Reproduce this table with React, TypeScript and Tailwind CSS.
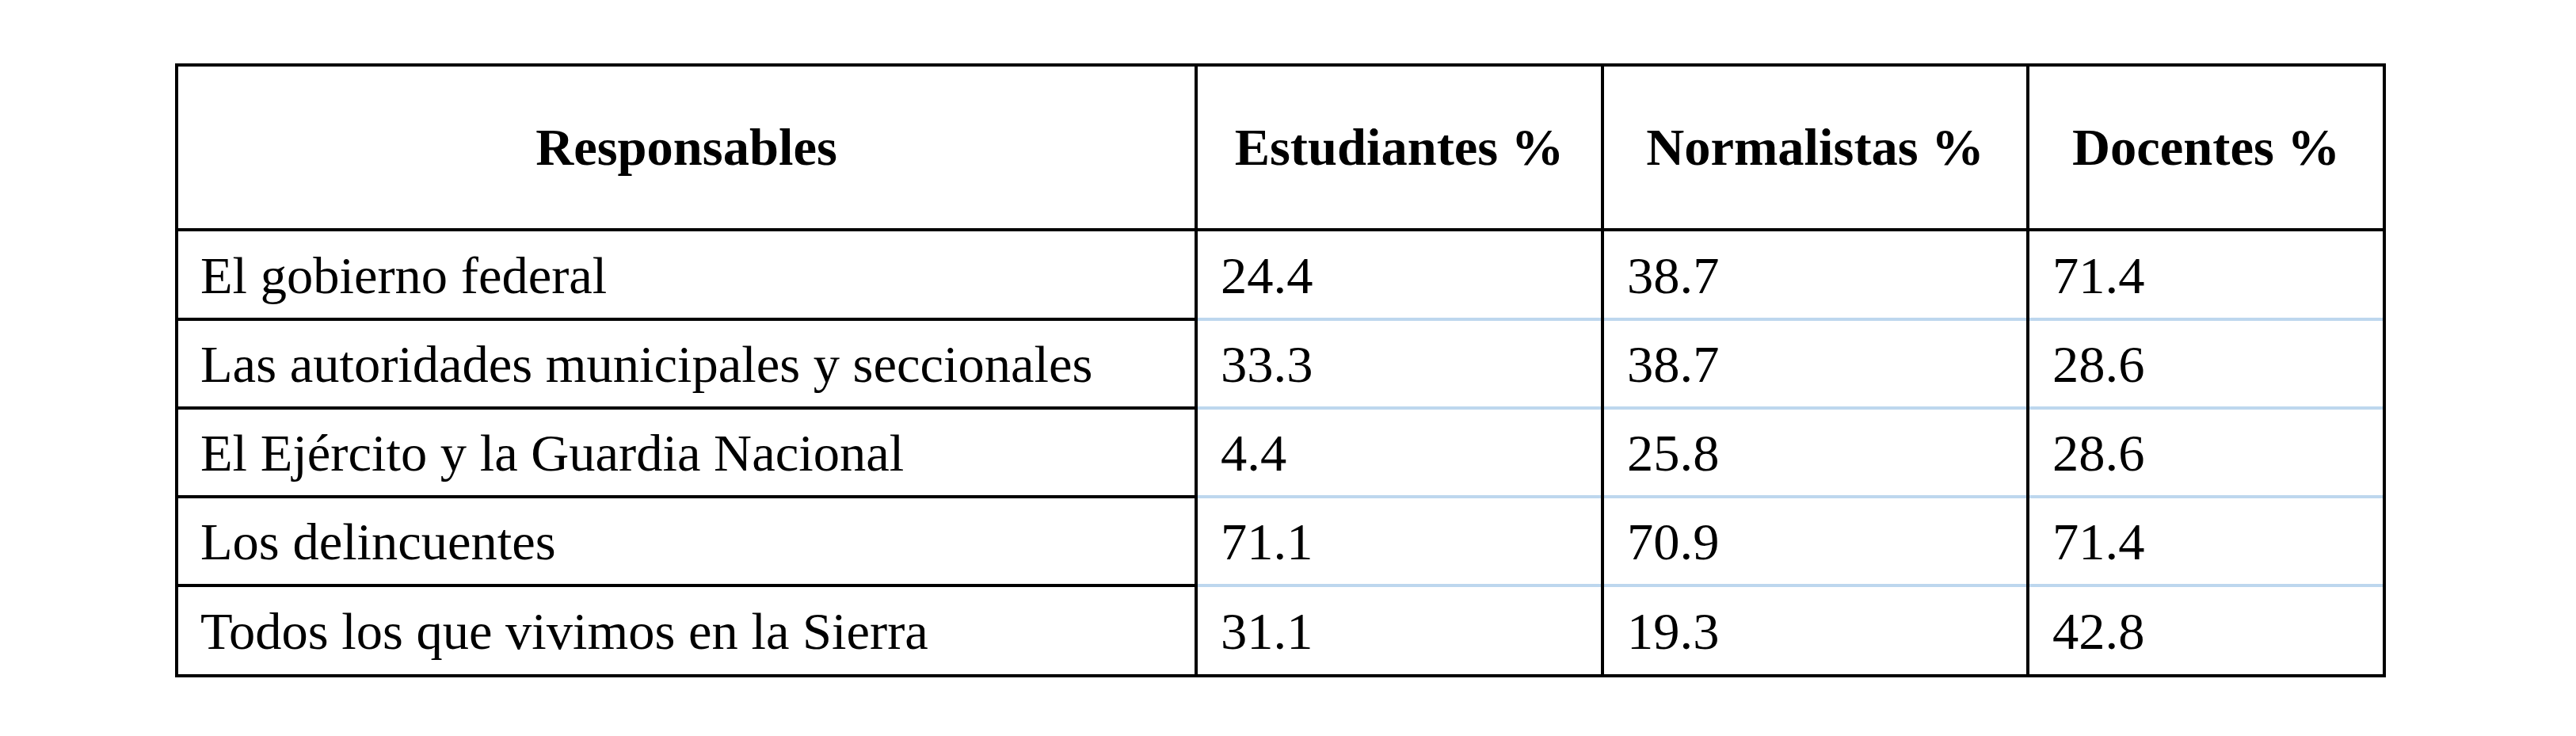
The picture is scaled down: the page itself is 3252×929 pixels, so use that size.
const headers = ["Responsables", "Estudiantes %", "Normalistas %", "Docentes %"];

const rows = [
  { label: "El gobierno federal", values: ["24.4", "38.7", "71.4"], h: "h-[113px]" },
  { label: "Las autoridades municipales y seccionales", values: ["33.3", "38.7", "28.6"], h: "h-[112px]" },
  { label: "El Ejército y la Guardia Nacional", values: ["4.4", "25.8", "28.6"], h: "h-[112px]" },
  { label: "Los delincuentes", values: ["71.1", "70.9", "71.4"], h: "h-[112px]" },
  { label: "Todos los que vivimos en la Sierra", values: ["31.1", "19.3", "42.8"], h: "h-[110px]" },
];

export default function App() {
  return (
    <div
      className="w-[3252px] h-[929px] bg-white text-black pt-[80px] pl-[221px]"
      style={{ fontFamily: '"Liberation Serif", "Times New Roman", serif' }}
    >
      <div className="w-[2791px] border-4 border-black text-[66.5px] leading-none">
        {/* Header */}
        <div className="grid grid-cols-[1287px_513px_537px_446px] h-[208px]">
          {headers.map((h, i) => (
            <div
              key={h}
              className={`flex items-center justify-center font-bold border-b-4 border-black ${
                i < 3 ? "border-r-4" : ""
              }`}
            >
              {h}
            </div>
          ))}
        </div>

        {/* Rows */}
        {rows.map((row, r) => {
          const last = r === rows.length - 1;
          return (
            <div key={row.label} className={`grid grid-cols-[1287px_513px_537px_446px] ${row.h}`}>
              <div
                className={`flex items-center pl-[28px] pt-[3px] border-r-4 border-black ${
                  last ? "" : "border-b-4"
                }`}
              >
                {row.label}
              </div>
              {row.values.map((v, i) => (
                <div key={i} className={i < 2 ? "border-r-4 border-black" : ""}>
                  <div
                    className={`h-full flex items-center pl-[29px] pt-[3px] ${
                      last ? "" : "border-b-4 border-[#bdd7ee]"
                    }`}
                  >
                    {v}
                  </div>
                </div>
              ))}
            </div>
          );
        })}
      </div>
    </div>
  );
}
